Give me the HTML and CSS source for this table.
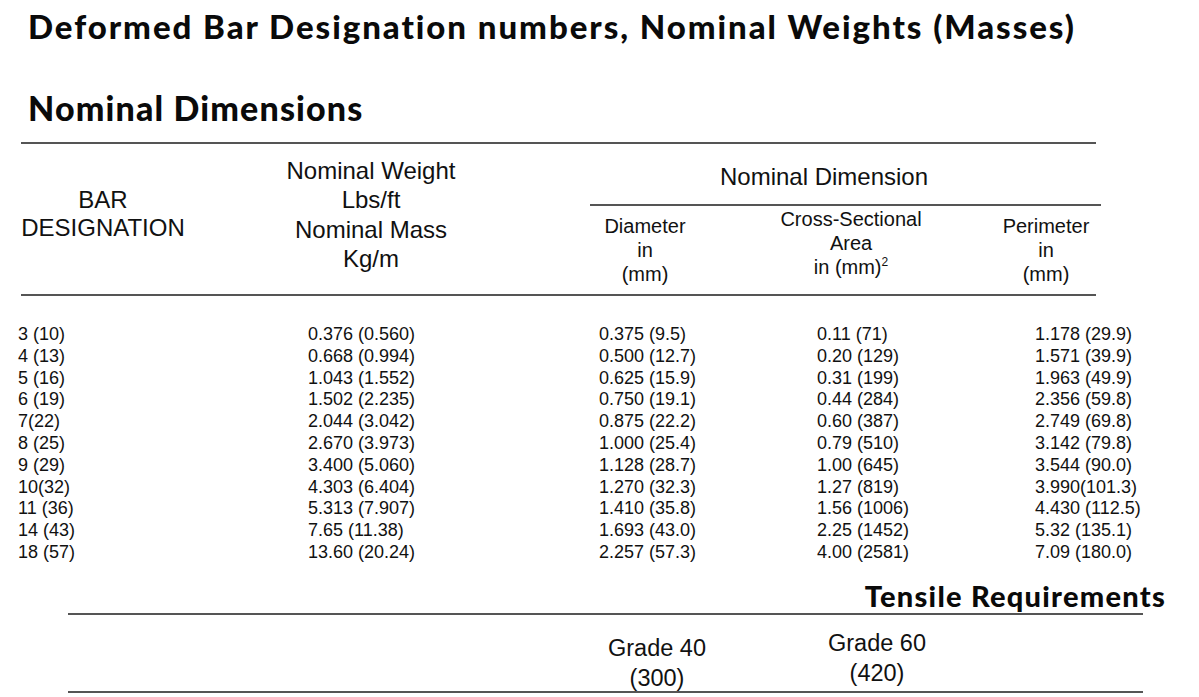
FILE: index.html
```html
<!DOCTYPE html>
<html lang="en">
<head>
<meta charset="utf-8">
<title>Deformed Bar Designation numbers</title>
<link rel="stylesheet" href="styles.css">
</head>
<body>
<div class="page">
  <h1 class="title">Deformed Bar Designation numbers, Nominal Weights (Masses)</h1>
  <h2 class="subtitle">Nominal Dimensions</h2>

  <section class="dims">
    <div class="head">
      <div class="h-bar">BAR<br>DESIGNATION</div>
      <div class="h-weight">Nominal Weight<br>Lbs/ft<br>Nominal Mass<br>Kg/m</div>
      <div class="h-group">
        <div class="h-group-title">Nominal Dimension</div>
        <div class="h-sub">
          <div class="sub sub-dia">Diameter<br>in<br>(mm)</div>
          <div class="sub sub-area">Cross-Sectional<br>Area<br>in (mm)<sup>2</sup></div>
          <div class="sub sub-per">Perimeter<br>in<br>(mm)</div>
        </div>
      </div>
    </div>

    <div class="rows">
      <div>3 (10)</div><div>0.376 (0.560)</div><div>0.375 (9.5)</div><div>0.11 (71)</div><div>1.178 (29.9)</div>
      <div>4 (13)</div><div>0.668 (0.994)</div><div>0.500 (12.7)</div><div>0.20 (129)</div><div>1.571 (39.9)</div>
      <div>5 (16)</div><div>1.043 (1.552)</div><div>0.625 (15.9)</div><div>0.31 (199)</div><div>1.963 (49.9)</div>
      <div>6 (19)</div><div>1.502 (2.235)</div><div>0.750 (19.1)</div><div>0.44 (284)</div><div>2.356 (59.8)</div>
      <div>7(22)</div><div>2.044 (3.042)</div><div>0.875 (22.2)</div><div>0.60 (387)</div><div>2.749 (69.8)</div>
      <div>8 (25)</div><div>2.670 (3.973)</div><div>1.000 (25.4)</div><div>0.79 (510)</div><div>3.142 (79.8)</div>
      <div>9 (29)</div><div>3.400 (5.060)</div><div>1.128 (28.7)</div><div>1.00 (645)</div><div>3.544 (90.0)</div>
      <div>10(32)</div><div>4.303 (6.404)</div><div>1.270 (32.3)</div><div>1.27 (819)</div><div>3.990(101.3)</div>
      <div>11 (36)</div><div>5.313 (7.907)</div><div>1.410 (35.8)</div><div>1.56 (1006)</div><div>4.430 (112.5)</div>
      <div>14 (43)</div><div>7.65 (11.38)</div><div>1.693 (43.0)</div><div>2.25 (1452)</div><div>5.32 (135.1)</div>
      <div>18 (57)</div><div>13.60 (20.24)</div><div>2.257 (57.3)</div><div>4.00 (2581)</div><div>7.09 (180.0)</div>
    </div>
  </section>

  <section class="tensile">
    <h2 class="tensile-title">Tensile Requirements</h2>
    <div class="t-table">
      <div class="t-blank"></div>
      <div class="grade grade-40">Grade 40<br>(300)</div>
      <div class="grade grade-60">Grade 60<br>(420)</div>
    </div>
  </section>
</div>
</body>
</html>
```

FILE: styles.css
```css
html, body {
  margin: 0;
  padding: 0;
  background: #ffffff;
}

body {
  font-family: "Liberation Sans", Arial, sans-serif;
  color: #111111;
}

.page {
  width: 1199px;
  height: 697px;
  overflow: hidden;
}

.title,
.subtitle,
.tensile-title {
  font-family: Lato, "Open Sans", sans-serif;
  font-weight: 900;
  color: #0a0a0a;
  margin: 0;
  white-space: nowrap;
}

.title {
  font-size: 33px;
  line-height: 40px;
  padding: 6px 0 0 28px;
  letter-spacing: 1.95px;
}

.subtitle {
  font-size: 34px;
  line-height: 40px;
  padding: 0 0 0 28px;
  margin-top: 42px;
  letter-spacing: 1.15px;
}

/* ---------- dimensions table ---------- */
.dims {
  margin-top: 14px;
}

.head {
  margin-left: 21px;
  width: 1075px;
  height: 150px;
  border-top: 2px solid #555;
  border-bottom: 2px solid #555;
  display: grid;
  grid-template-columns: 164px 405px 511px;
  align-items: start;
  text-align: center;
  color: #111;
}

.h-bar {
  font-size: 24px;
  line-height: 28px;
  padding-top: 42px;
}

.h-weight {
  font-size: 24px;
  line-height: 29.3px;
  padding-top: 12px;
  padding-right: 33px;
}

.h-group-title {
  font-size: 24px;
  line-height: 28px;
  padding-top: 19px;
  padding-right: 43px;
  padding-bottom: 13px;
  border-bottom: 2px solid #555;
}

.h-sub {
  display: grid;
  grid-template-columns: 110px 302px 88px;
  align-items: start;
}

.sub {
  font-size: 20px;
  line-height: 24px;
  padding-top: 8px;
}

.sub-area {
  padding-top: 1px;
}

.sub sup {
  font-size: 12px;
  line-height: 0;
  vertical-align: 8px;
}

.rows {
  margin-left: 18px;
  margin-top: 28px;
  display: grid;
  grid-template-columns: 290px 291px 218px 218px auto;
  font-size: 18px;
  line-height: 21.8px;
  color: #111;
  white-space: nowrap;
}

/* ---------- tensile ---------- */
.tensile {
  padding-left: 68px;
  margin-top: 15px;
}

.tensile-title {
  width: 1098px;
  text-align: right;
  font-size: 29px;
  line-height: 34px;
  letter-spacing: 1.25px;
}

.t-table {
  width: 1075px;
  height: 76px;
  border-top: 2px solid #555;
  border-bottom: 2px solid #555;
  display: grid;
  grid-template-columns: 509px 160px 280px;
  align-items: start;
  text-align: center;
}

.grade {
  font-size: 23.5px;
  line-height: 30px;
  height: 76px;
  box-sizing: border-box;
  color: #111;
}

.grade-40 {
  padding-top: 18px;
}

.grade-60 {
  padding-top: 13px;
}
```
